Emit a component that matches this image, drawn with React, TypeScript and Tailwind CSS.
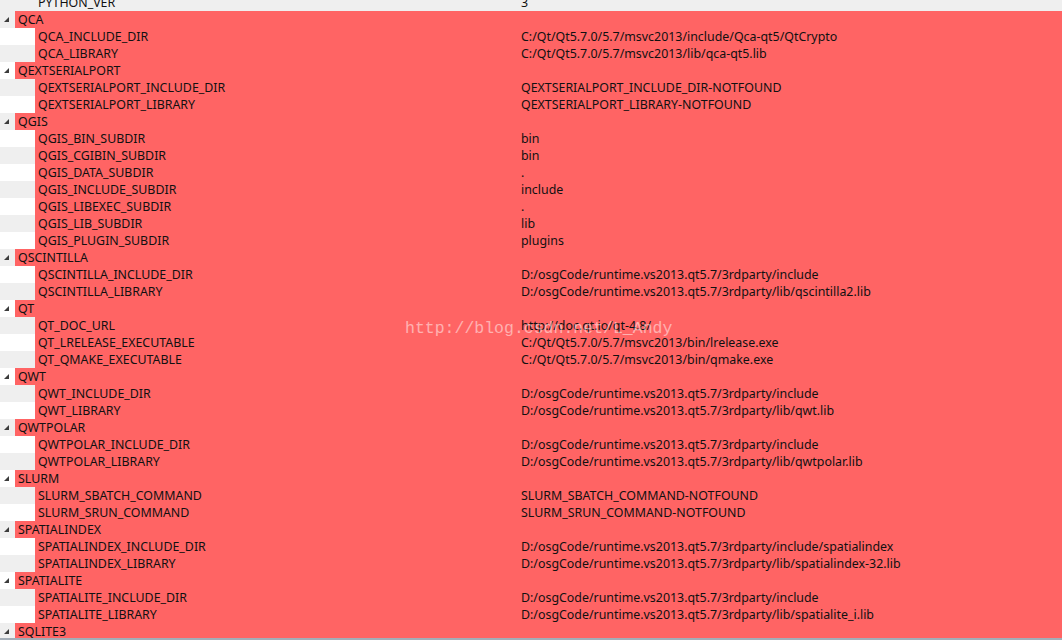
import React from 'react';

type Entry = { name: string; value: string };
type Group = { name: string; items: Entry[] };

const groups: Group[] = [
  {
    name: 'QCA',
    items: [
      { name: 'QCA_INCLUDE_DIR', value: 'C:/Qt/Qt5.7.0/5.7/msvc2013/include/Qca-qt5/QtCrypto' },
      { name: 'QCA_LIBRARY', value: 'C:/Qt/Qt5.7.0/5.7/msvc2013/lib/qca-qt5.lib' },
    ],
  },
  {
    name: 'QEXTSERIALPORT',
    items: [
      { name: 'QEXTSERIALPORT_INCLUDE_DIR', value: 'QEXTSERIALPORT_INCLUDE_DIR-NOTFOUND' },
      { name: 'QEXTSERIALPORT_LIBRARY', value: 'QEXTSERIALPORT_LIBRARY-NOTFOUND' },
    ],
  },
  {
    name: 'QGIS',
    items: [
      { name: 'QGIS_BIN_SUBDIR', value: 'bin' },
      { name: 'QGIS_CGIBIN_SUBDIR', value: 'bin' },
      { name: 'QGIS_DATA_SUBDIR', value: '.' },
      { name: 'QGIS_INCLUDE_SUBDIR', value: 'include' },
      { name: 'QGIS_LIBEXEC_SUBDIR', value: '.' },
      { name: 'QGIS_LIB_SUBDIR', value: 'lib' },
      { name: 'QGIS_PLUGIN_SUBDIR', value: 'plugins' },
    ],
  },
  {
    name: 'QSCINTILLA',
    items: [
      { name: 'QSCINTILLA_INCLUDE_DIR', value: 'D:/osgCode/runtime.vs2013.qt5.7/3rdparty/include' },
      { name: 'QSCINTILLA_LIBRARY', value: 'D:/osgCode/runtime.vs2013.qt5.7/3rdparty/lib/qscintilla2.lib' },
    ],
  },
  {
    name: 'QT',
    items: [
      { name: 'QT_DOC_URL', value: 'http://doc.qt.io/qt-4.8/' },
      { name: 'QT_LRELEASE_EXECUTABLE', value: 'C:/Qt/Qt5.7.0/5.7/msvc2013/bin/lrelease.exe' },
      { name: 'QT_QMAKE_EXECUTABLE', value: 'C:/Qt/Qt5.7.0/5.7/msvc2013/bin/qmake.exe' },
    ],
  },
  {
    name: 'QWT',
    items: [
      { name: 'QWT_INCLUDE_DIR', value: 'D:/osgCode/runtime.vs2013.qt5.7/3rdparty/include' },
      { name: 'QWT_LIBRARY', value: 'D:/osgCode/runtime.vs2013.qt5.7/3rdparty/lib/qwt.lib' },
    ],
  },
  {
    name: 'QWTPOLAR',
    items: [
      { name: 'QWTPOLAR_INCLUDE_DIR', value: 'D:/osgCode/runtime.vs2013.qt5.7/3rdparty/include' },
      { name: 'QWTPOLAR_LIBRARY', value: 'D:/osgCode/runtime.vs2013.qt5.7/3rdparty/lib/qwtpolar.lib' },
    ],
  },
  {
    name: 'SLURM',
    items: [
      { name: 'SLURM_SBATCH_COMMAND', value: 'SLURM_SBATCH_COMMAND-NOTFOUND' },
      { name: 'SLURM_SRUN_COMMAND', value: 'SLURM_SRUN_COMMAND-NOTFOUND' },
    ],
  },
  {
    name: 'SPATIALINDEX',
    items: [
      { name: 'SPATIALINDEX_INCLUDE_DIR', value: 'D:/osgCode/runtime.vs2013.qt5.7/3rdparty/include/spatialindex' },
      { name: 'SPATIALINDEX_LIBRARY', value: 'D:/osgCode/runtime.vs2013.qt5.7/3rdparty/lib/spatialindex-32.lib' },
    ],
  },
  {
    name: 'SPATIALITE',
    items: [
      { name: 'SPATIALITE_INCLUDE_DIR', value: 'D:/osgCode/runtime.vs2013.qt5.7/3rdparty/include' },
      { name: 'SPATIALITE_LIBRARY', value: 'D:/osgCode/runtime.vs2013.qt5.7/3rdparty/lib/spatialite_i.lib' },
    ],
  },
  { name: 'SQLITE3', items: [] },
];

const Arrow = () => (
  <svg width="15" height="17" viewBox="0 0 15 17" className="shrink-0">
    <polygon points="9,6 9,11 4,11" fill="#3c3c3c" />
  </svg>
);

const GroupRow = ({ name, alt }: { name: string; alt: boolean }) => (
  <div className="flex h-[17px]">
    <div className={`w-[15px] shrink-0 ${alt ? 'bg-[#efefef]' : 'bg-white'}`}>
      <Arrow />
    </div>
    <div className="flex-1 bg-[#ff6464] pl-[3px] leading-[17px] whitespace-nowrap">{name}</div>
  </div>
);

const ItemRow = ({ entry, alt }: { entry: Entry; alt: boolean }) => (
  <div className="flex h-[17px]">
    <div className={`w-[35px] shrink-0 ${alt ? 'bg-[#efefef]' : 'bg-white'}`} />
    <div className="flex flex-1 bg-[#ff6464] pl-[3px] leading-[17px] whitespace-nowrap">
      <div className="w-[483px] shrink-0">{entry.name}</div>
      <div>{entry.value}</div>
    </div>
  </div>
);

export default function App() {
  let idx = 0;
  const rows: React.ReactNode[] = [];
  groups.forEach((g) => {
    rows.push(<GroupRow key={g.name} name={g.name} alt={idx % 2 === 0} />);
    idx++;
    g.items.forEach((it) => {
      rows.push(<ItemRow key={it.name} entry={it} alt={idx % 2 === 0} />);
      idx++;
    });
  });

  return (
    <div
      className="relative w-[1062px] h-[640px] overflow-hidden bg-white text-[12.4px] text-[#111]"
      style={{ fontFamily: '"Noto Sans", "Open Sans", sans-serif' }}
    >
      <div className="h-[638px] overflow-hidden">
        <div className="-mt-[6px] flex flex-col">
          <div className="flex h-[17px] bg-[#efefef] leading-[17px] whitespace-nowrap">
            <div className="w-[38px] shrink-0" />
            <div className="w-[483px] shrink-0">PYTHON_VER</div>
            <div>3</div>
          </div>
          {rows}
        </div>
      </div>
      <div className="h-[2px] bg-[#a3adb7]" />
      <div
        className="pointer-events-none absolute left-[405px] top-[318px] text-[16.5px] leading-[22px] text-white/50 whitespace-nowrap"
        style={{ fontFamily: '"Liberation Mono", monospace' }}
      >
        http://blog.csdn.net/L_Andy
      </div>
    </div>
  );
}
